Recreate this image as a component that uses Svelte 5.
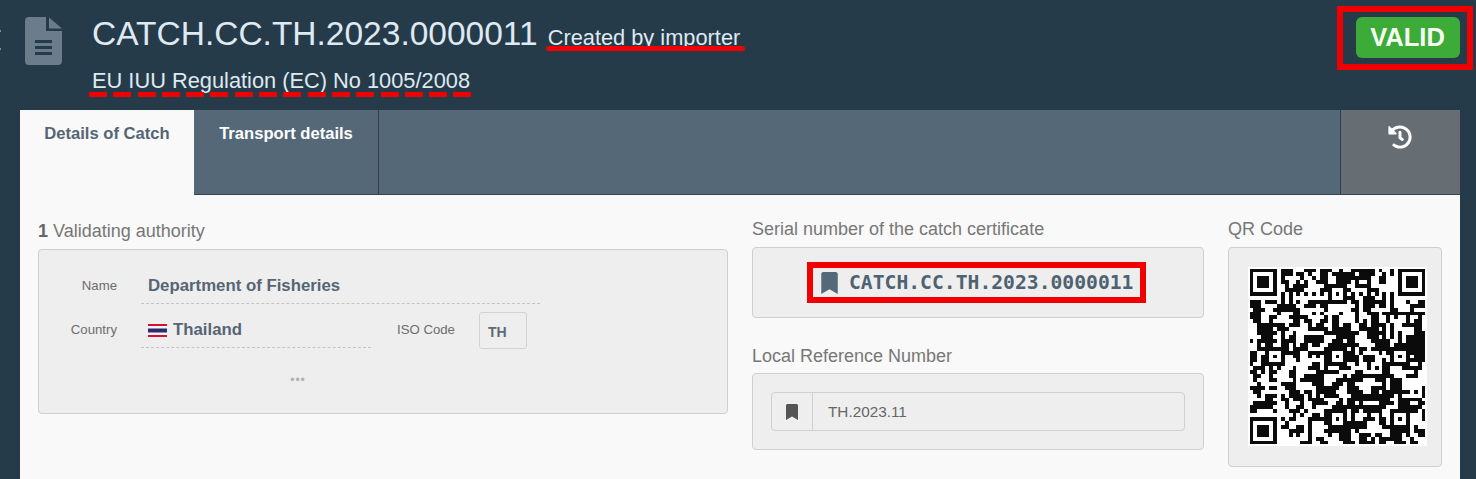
<script>
  const N = 45;
  function finder(m, r, c) {
    for (let y = 0; y < 7; y++) for (let x = 0; x < 7; x++) {
      const edge = x === 0 || y === 0 || x === 6 || y === 6;
      const core = x >= 2 && x <= 4 && y >= 2 && y <= 4;
      m[r + y][c + x] = edge || core ? 1 : 0;
    }
  }
  function align(m, r, c) {
    for (let y = -2; y <= 2; y++) for (let x = -2; x <= 2; x++) {
      m[r + y][c + x] = Math.max(Math.abs(x), Math.abs(y)) === 1 ? 0 : 1;
    }
  }
  function buildQr() {
    let seed = 20231;
    const rand = () => {
      seed = (seed + 0x6d2b79f5) | 0;
      let t = Math.imul(seed ^ (seed >>> 15), 1 | seed);
      t = (t + Math.imul(t ^ (t >>> 7), 61 | t)) ^ t;
      return ((t ^ (t >>> 14)) >>> 0) / 4294967296;
    };
    const m = [];
    for (let y = 0; y < N; y++) {
      const row = [];
      for (let x = 0; x < N; x++) {
        let v = rand() < 0.54 ? 1 : 0;
        const r = rand();
        if (r < 0.22 && x > 0) v = row[x - 1];
        else if (r < 0.44 && y > 0) v = m[y - 1][x];
        row.push(v);
      }
      m.push(row);
    }
    for (let i = 0; i < N; i++) { m[6][i] = (i + 1) % 2; m[i][6] = (i + 1) % 2; }
    for (let y = 0; y < 8; y++) for (let x = 0; x < 8; x++) {
      m[y][x] = 0; m[y][N - 1 - x] = 0; m[N - 1 - y][x] = 0;
    }
    finder(m, 0, 0); finder(m, 0, N - 7); finder(m, N - 7, 0);
    for (const [r, c] of [[6, 22], [22, 6], [22, 22], [22, 38], [38, 22], [38, 38]]) align(m, r, c);
    let d = '';
    m.forEach((row, y) => row.forEach((v, x) => { if (v) d += `M${x} ${y}h1v1h-1z`; }));
    return d;
  }
  const qrPath = buildQr();
  const bookmark = 'M0 512V48C0 21.49 21.49 0 48 0h288c26.51 0 48 21.49 48 48v464L192 400 0 512z';
  const history = 'M504 255.531c.253 136.64-111.18 248.372-247.82 248.468-59.015.042-113.223-20.53-155.822-54.911-11.077-8.94-11.905-25.541-1.839-35.607l11.267-11.267c8.609-8.609 22.353-9.551 31.891-1.984C173.062 425.135 212.781 440 256 440c101.705 0 184-82.311 184-184 0-101.705-82.311-184-184-184-48.814 0-93.149 18.969-126.068 49.932l50.754 50.754c10.08 10.08 2.941 27.314-11.313 27.314H24c-8.837 0-16-7.163-16-16V38.627c0-14.254 17.234-21.393 27.314-11.314l49.372 49.372C129.209 34.136 189.552 8 256 8c136.81 0 247.747 110.78 248 247.531zm-180.912 78.784l9.823-12.63c8.138-10.463 6.253-25.542-4.21-33.679L288 256.349V152c0-13.255-10.745-24-24-24h-16c-13.255 0-24 10.745-24 24v135.651l65.409 50.874c10.463 8.137 25.541 6.253 33.679-4.21z';
</script>

<div class="page">
  <header class="top">
    <div class="edge-mark"></div>
    <svg class="file" viewBox="0 0 37 48" aria-hidden="true">
      <path d="M4 0H21V14H37V44a4 4 0 0 1-4 4H4a4 4 0 0 1-4-4V4a4 4 0 0 1 4-4z" fill="#6b7c8a" />
      <path d="M24 0.5 37 11.5H24z" fill="#6b7c8a" />
      <path d="M10 23h17v3H10zM10 29h17v3H10zM10 35h17v3H10z" fill="#263b4a" />
    </svg>
    <div class="titles">
      <div class="title-line">
        <h1>CATCH.CC.TH.2023.0000011</h1>
        <span class="creator">Created by importer</span>
      </div>
      <div class="regulation">EU IUU Regulation (EC) No 1005/2008</div>
    </div>
    <div class="valid-frame"><span class="valid">VALID</span></div>
  </header>

  <section class="panel">
    <nav class="tabs">
      <div class="tab active">Details of Catch</div>
      <div class="tab">Transport details</div>
      <div class="tab-fill"></div>
      <div class="tab-history">
        <svg viewBox="0 0 512 512" aria-hidden="true"><path d={history} fill="#fff" /></svg>
      </div>
    </nav>

    <div class="content">
      <div class="col-left">
        <div class="label"><b>1</b> Validating authority</div>
        <div class="box authority">
          <div class="row">
            <span class="key">Name</span>
            <span class="value name">Department of Fisheries</span>
          </div>
          <div class="row second">
            <span class="key">Country</span>
            <span class="value country">
              <svg class="flag" viewBox="0 0 19 13" aria-hidden="true">
                <rect width="19" height="13" fill="#d8102c" />
                <rect y="2" width="19" height="9" fill="#f4f4f8" />
                <rect y="4.5" width="19" height="4" fill="#2d2a6e" />
              </svg>
              Thailand
            </span>
            <span class="key iso">ISO Code</span>
            <span class="iso-code">TH</span>
          </div>
          <div class="more">•••</div>
        </div>
      </div>

      <div class="col-mid">
        <div class="label">Serial number of the catch certificate</div>
        <div class="box serial-box">
          <div class="serial">
            <svg viewBox="0 0 384 512" aria-hidden="true"><path d={bookmark} fill="#54697a" /></svg>
            <span>CATCH.CC.TH.2023.0000011</span>
          </div>
        </div>
        <div class="label local">Local Reference Number</div>
        <div class="box local-box">
          <div class="input">
            <span class="addon">
              <svg viewBox="0 0 384 512" aria-hidden="true"><path d={bookmark} fill="#555" /></svg>
            </span>
            <span class="input-text">TH.2023.11</span>
          </div>
        </div>
      </div>

      <div class="col-right">
        <div class="label">QR Code</div>
        <div class="box qr-box">
          <svg class="qr" viewBox="-0.4 -0.4 45.8 45.8" shape-rendering="crispEdges" aria-label="QR code">
            <rect x="-0.4" y="-0.4" width="45.8" height="45.8" fill="#fff" />
            <path d={qrPath} fill="#0b0b0b" />
          </svg>
        </div>
      </div>
    </div>
  </section>
</div>

<style>
  :global(body) {
    margin: 0;
    background: #263b4a;
    font-family: "Liberation Sans", Arial, sans-serif;
  }
  .page {
    height: 479px;
    overflow: hidden;
    display: flex;
    flex-direction: column;
    background: #263b4a;
  }
  .top {
    height: 110px;
    flex: none;
    display: flex;
    align-items: flex-start;
    padding-left: 25px;
    padding-right: 3px;
    box-sizing: border-box;
    position: relative;
  }
  .edge-mark {
    position: absolute;
    left: -4px;
    top: 30px;
    width: 5px;
    height: 20px;
    border-top: 2px dotted #a9b6c0;
    border-bottom: 2px dotted #a9b6c0;
    box-sizing: border-box;
  }
  .file {
    width: 37px;
    height: 48px;
    margin-top: 17px;
    flex: none;
  }
  .titles {
    margin-left: 30px;
    flex: 1;
    color: #dfe9f1;
  }
  .title-line {
    display: flex;
    align-items: baseline;
    margin-top: 14px;
  }
  h1 {
    margin: 0;
    font-size: 33.5px;
    line-height: 40px;
    font-weight: 400;
  }
  .creator {
    margin-left: 10px;
    font-size: 21.8px;
    line-height: 26px;
    position: relative;
  }
  .creator::after {
    content: "";
    position: absolute;
    left: -2px;
    right: -5px;
    top: 21px;
    height: 5px;
    border-radius: 3px;
    background: #f00000;
  }
  .regulation {
    margin-top: 14px;
    font-size: 21.8px;
    line-height: 26px;
    width: max-content;
    position: relative;
  }
  .regulation::after {
    content: "";
    position: absolute;
    left: -3px;
    right: -2px;
    top: 24px;
    height: 5px;
    background: repeating-linear-gradient(90deg, #f00000 0 18px, transparent 18px 24.3px);
  }
  .valid-frame {
    margin-top: 6px;
    width: 136px;
    height: 64px;
    border: 6px solid #f00000;
    box-sizing: border-box;
    display: flex;
    align-items: center;
    justify-content: center;
    padding-left: 5px;
    padding-bottom: 1px;
  }
  .valid {
    width: 104px;
    height: 41px;
    border-radius: 6px;
    background: #3dab38;
    color: #f6fff2;
    font-size: 25.5px;
    font-weight: 700;
    line-height: 40px;
    text-align: center;
  }
  .panel {
    margin: 0 16px 0 20px;
    flex: 1;
    display: flex;
    flex-direction: column;
    background: #f9f9f9;
  }
  .tabs {
    height: 85px;
    flex: none;
    display: flex;
    background: #546878;
    border-bottom: 1px solid #33434f;
    box-sizing: border-box;
  }
  .tab {
    width: 185px;
    box-sizing: border-box;
    border-right: 1px solid #2f404d;
    padding-top: 14px;
    text-align: center;
    font-size: 16.6px;
    line-height: 20px;
    font-weight: 700;
    color: #fff;
  }
  .tab.active {
    width: 174px;
    height: 85px;
    background: #f9f9f9;
    color: #566573;
    border-right: 0;
    position: relative;
    z-index: 1;
  }
  .tab-fill {
    flex: 1;
  }
  .tab-history {
    width: 120px;
    box-sizing: border-box;
    border-left: 1px solid #2f404d;
    background: #666e73;
    display: flex;
    justify-content: center;
    padding: 15px 2px 0 0;
  }
  .tab-history svg {
    width: 24px;
    height: 24px;
  }
  .content {
    display: grid;
    grid-template-columns: 690px 452px 214px;
    column-gap: 24px;
    padding: 0 18px;
    align-items: start;
  }
  .label {
    font-size: 18px;
    line-height: 20px;
    color: #777;
    margin-top: 24px;
    margin-bottom: 8px;
  }
  .label b {
    color: #666;
  }
  .col-left .label {
    margin-top: 26px;
  }
  .box {
    box-sizing: border-box;
    background: #eee;
    border: 1px solid #cfcfcf;
    border-radius: 4px;
  }
  .authority {
    height: 165px;
    padding-top: 18px;
    position: relative;
  }
  .row {
    display: flex;
    align-items: center;
    height: 36px;
  }
  .row.second {
    margin-top: 8px;
  }
  .key {
    width: 78px;
    text-align: right;
    font-size: 13.2px;
    line-height: 16px;
    margin-bottom: 1px;
    color: #6d6d6d;
    flex: none;
  }
  .value {
    margin-left: 24px;
    height: 36px;
    box-sizing: border-box;
    border-bottom: 1px dashed #c4c4c4;
    padding: 1px 0 0 7px;
    font-size: 16.8px;
    font-weight: 700;
    color: #566573;
    display: flex;
    align-items: center;
  }
  .name {
    width: 399px;
  }
  .country {
    width: 230px;
  }
  .flag {
    width: 19px;
    height: 13px;
    margin-right: 6px;
    flex: none;
  }
  .key.iso {
    width: auto;
    margin-left: 26px;
  }
  .iso-code {
    margin-left: 24px;
    width: 48px;
    height: 37px;
    box-sizing: border-box;
    border: 1px solid #d2d2d2;
    border-radius: 3px;
    padding: 9px 0 0 8px;
    font-size: 14px;
    font-weight: 700;
    line-height: 20px;
    color: #5d6b78;
  }
  .more {
    margin-top: 22px;
    width: 36px;
    padding-left: 241px;
    text-align: center;
    font-size: 12px;
    letter-spacing: 1px;
    color: #b0b0b0;
    line-height: 20px;
  }
  .serial-box {
    height: 71px;
    display: flex;
    justify-content: center;
    align-items: flex-start;
    padding: 14px 3px 0 0;
  }
  .serial {
    width: 339px;
    height: 41px;
    box-sizing: border-box;
    border: 6px solid #f00000;
    display: flex;
    align-items: center;
    padding-left: 8px;
    color: #4f6272;
    font-family: "DejaVu Sans Mono", monospace;
    font-size: 19.7px;
    font-weight: 700;
  }
  .serial svg {
    width: 17px;
    height: 22px;
    margin-right: 11px;
    flex: none;
  }
  .label.local {
    margin-top: 28px;
    margin-bottom: 7px;
  }
  .local-box {
    height: 77px;
    padding: 18px;
  }
  .input {
    height: 39px;
    box-sizing: border-box;
    border: 1px solid #d0d0d0;
    border-radius: 4px;
    display: flex;
    align-items: center;
  }
  .addon {
    width: 41px;
    height: 100%;
    box-sizing: border-box;
    border-right: 1px solid #d0d0d0;
    display: flex;
    align-items: center;
    justify-content: center;
    flex: none;
  }
  .addon svg {
    width: 12px;
    height: 16px;
  }
  .input-text {
    margin-left: 15px;
    font-size: 15.3px;
    color: #666;
  }
  .qr-box {
    height: 220px;
    padding: 19px 0 0 19px;
  }
  .qr {
    display: block;
    width: 179px;
    height: 179px;
  }
</style>
